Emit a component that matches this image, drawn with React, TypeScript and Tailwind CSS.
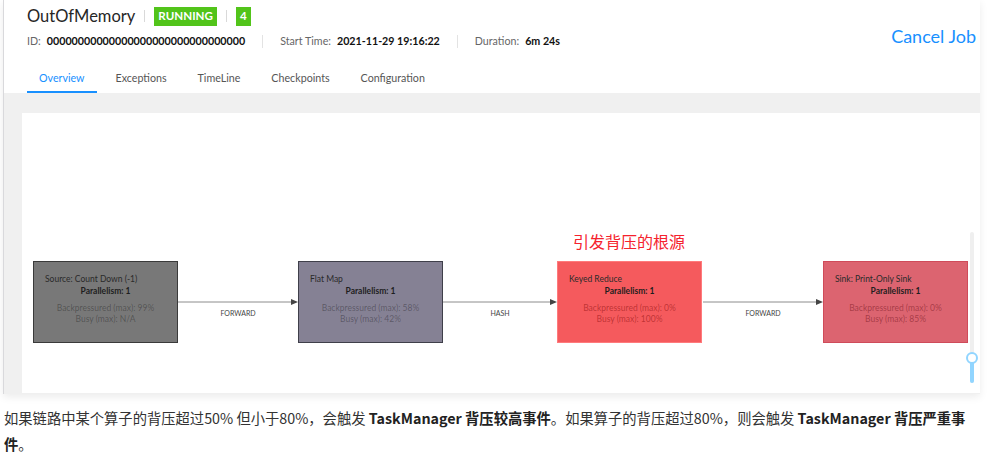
import React from "react";

const sans = { fontFamily: 'Lato, "Noto Sans", "Noto Sans CJK SC", sans-serif' };

type NodeT = {
  left: number;
  title: string;
  bp: string;
  busy: string;
  bg: string;
  border: string;
  sub: string;
};

const nodes: NodeT[] = [
  { left: 11, title: "Source: Count Down (-1)", bp: "99%", busy: "N/A", bg: "#787878", border: "#3a3a3a", sub: "rgba(0,0,0,0.32)" },
  { left: 276, title: "Flat Map", bp: "58%", busy: "42%", bg: "#858194", border: "#3f3f4a", sub: "rgba(0,0,0,0.32)" },
  { left: 535, title: "Keyed Reduce", bp: "0%", busy: "100%", bg: "#f55a5d", border: "#ff7a7c", sub: "rgba(120,0,0,0.45)" },
  { left: 801, title: "Sink: Print-Only Sink", bp: "0%", busy: "85%", bg: "#dc6470", border: "#cf4b5a", sub: "rgba(90,0,10,0.42)" },
];

const edges = [
  { x1: 156, x2: 276, label: "FORWARD" },
  { x1: 421, x2: 535, label: "HASH" },
  { x1: 681, x2: 801, label: "FORWARD" },
];

export default function App() {
  return (
    <div className="h-[463px] w-[988px] overflow-hidden bg-white" style={sans}>
      {/* screenshot block */}
      <div className="ml-[3px] w-[977px] border-l border-[#d9d9dc] shadow-[0_3px_8px_rgba(0,0,0,0.08)]">
        {/* header */}
        <div className="h-[93px] bg-white">
          <div className="flex h-[62px] justify-between">
            <div className="pl-[23px]">
              <div className="flex h-[28px] items-center pt-[4px]">
                <span className="text-[16.5px] leading-[28px] text-[#262626]">OutOfMemory</span>
                <span className="mx-[9px] inline-block h-[12px] w-px bg-[#d9d9d9]" />
                <span className="flex h-[19px] items-center bg-[#52c41a] px-[4px] text-[11.6px] font-bold text-white">RUNNING</span>
                <span className="mx-[9px] inline-block h-[12px] w-px bg-[#d9d9d9]" />
                <span className="flex h-[19px] items-center bg-[#52c41a] px-[4px] text-[11.6px] font-bold text-white">4</span>
              </div>
              <div className="mt-[4px] flex h-[18px] items-center text-[10.7px]">
                <span className="text-[#666]">ID:</span>
                <span className="ml-[6px] font-bold text-[#111]">00000000000000000000000000000000</span>
                <span className="mx-[17px] inline-block h-[13px] w-px bg-[#e3e3e3]" />
                <span className="text-[#666]">Start Time:</span>
                <span className="ml-[6px] font-bold text-[#111]">2021-11-29 19:16:22</span>
                <span className="mx-[17px] inline-block h-[13px] w-px bg-[#e3e3e3]" />
                <span className="text-[#666]">Duration:</span>
                <span className="ml-[6px] font-bold text-[#111]">6m 24s</span>
              </div>
            </div>
            <div className="pr-[4px] pt-[24px] text-[18px] leading-[24px] text-[#1890ff]">Cancel Job</div>
          </div>
          <div className="flex h-[31px] items-end gap-[7px] pl-[23px] text-[10.7px] text-[#555]">
            <div className="flex h-[31px] items-center border-b-2 border-[#1890ff] px-[12px] pt-[3px] text-[#1890ff]">Overview</div>
            <div className="flex h-[31px] items-center px-[12px] pt-[1px]">Exceptions</div>
            <div className="flex h-[31px] items-center px-[12px] pt-[1px]">TimeLine</div>
            <div className="flex h-[31px] items-center px-[12px] pt-[1px]">Checkpoints</div>
            <div className="flex h-[31px] items-center px-[12px] pt-[1px]">Configuration</div>
          </div>
        </div>
        {/* gray area */}
        <div className="h-[301px] bg-[#f0f0f0] pl-[18px] pt-[20px]">
          <div className="relative h-[280px] w-[958px] bg-white">
            <svg className="absolute left-0 top-0" width="958" height="280">
              {edges.map((e, i) => (
                <g key={i}>
                  <line x1={e.x1} y1={189} x2={e.x2 - 6} y2={189} stroke="#8c8c8c" strokeWidth="1" />
                  <polygon points={`${e.x2 - 7},186 ${e.x2},189 ${e.x2 - 7},192`} fill="#444" />
                </g>
              ))}
            </svg>
            {edges.map((e, i) => (
              <div
                key={i}
                className="absolute top-[195px] flex w-[120px] justify-center text-[7px] leading-[10px] text-[#444]"
                style={{ left: (e.x1 + e.x2) / 2 - 60 }}
              >
                {e.label}
              </div>
            ))}
            {nodes.map((n, i) => (
              <div
                key={i}
                className="absolute top-[148px] h-[82px] w-[145px] border-[1.5px] pt-[11px]"
                style={{ left: n.left, backgroundColor: n.bg, borderColor: n.border }}
              >
                <div className="pl-[11px] text-[8.5px] leading-[12px] text-[#2a2a2a]">{n.title}</div>
                <div className="text-center text-[8.5px] font-bold leading-[12px] text-[#1e1e1e]">Parallelism: 1</div>
                <div className="mt-[6px] text-center text-[8.5px] leading-[11px]" style={{ color: n.sub }}>
                  Backpressured (max): {n.bp}
                </div>
                <div className="text-center text-[8.5px] leading-[11px]" style={{ color: n.sub }}>
                  Busy (max): {n.busy}
                </div>
              </div>
            ))}
            <div
              className="absolute left-[551px] top-[116px] text-[16px] leading-[24px] text-[#f5222d]"
              style={{ fontFamily: '"Noto Sans CJK SC", sans-serif' }}
            >
              引发背压的根源
            </div>
            {/* zoom slider */}
            <div className="absolute left-[948px] top-[119px] h-[151px] w-[4px] rounded-full bg-[#efefef]" />
            <div className="absolute left-[948px] top-[245px] h-[25px] w-[4px] rounded-full bg-[#91d5ff]" />
            <div className="absolute left-[944px] top-[239px] h-[12px] w-[12px] rounded-full border-2 border-[#91d5ff] bg-white" />
          </div>
        </div>
      </div>
      {/* paragraph */}
      <p
        className="ml-[4px] mt-[11px] w-[962px] text-[14.3px] leading-[26px] text-[#333]"
        style={{ fontFamily: '"Noto Sans CJK SC", "Noto Sans", sans-serif' }}
      >
        如果链路中某个算子的背压超过50% 但小于80%，会触发 <span className="font-bold text-[#222]">TaskManager 背压较高事件</span>。如果算子的背压超过80%，则会触发 <span className="font-bold text-[#222]">TaskManager 背压严重事件</span>。
      </p>
    </div>
  );
}
